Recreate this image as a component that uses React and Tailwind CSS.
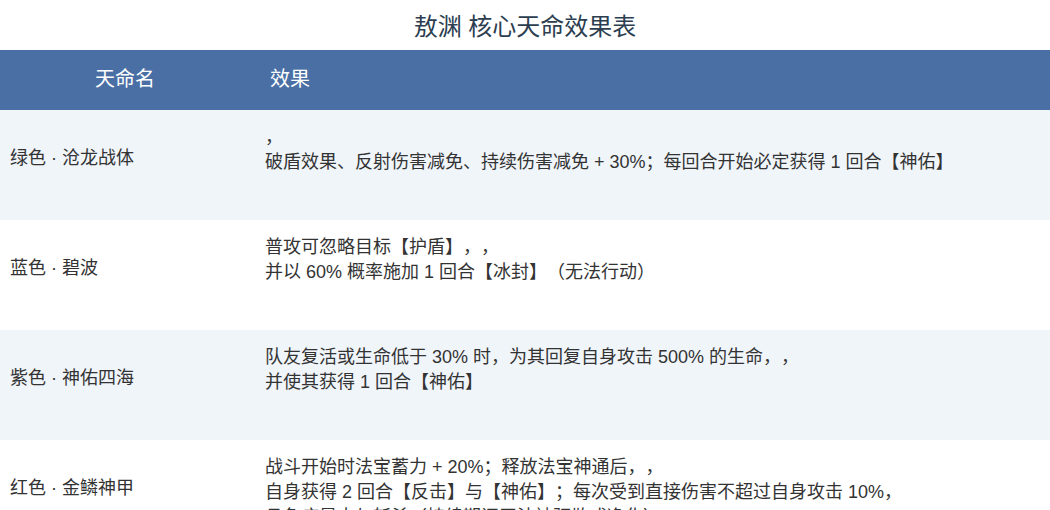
import React from 'react';

const rows = [
    {
        name: '绿色 · 沧龙战体',
        lines: ['，', '破盾效果、反射伤害减免、持续伤害减免 + 30%；每回合开始必定获得 1 回合【神佑】'],
    },
    {
        name: '蓝色 · 碧波',
        lines: ['普攻可忽略目标【护盾】，，', '并以 60% 概率施加 1 回合【冰封】（无法行动）'],
    },
    {
        name: '紫色 · 神佑四海',
        lines: ['队友复活或生命低于 30% 时，为其回复自身攻击 500% 的生命，，', '并使其获得 1 回合【神佑】'],
    },
    {
        name: '红色 · 金鳞神甲',
        lines: [
            '战斗开始时法宝蓄力 + 20%；释放法宝神通后，，',
            '自身获得 2 回合【反击】与【神佑】；每次受到直接伤害不超过自身攻击 10%，',
            '且免疫暴击与斩杀（持续期间无法被驱散或净化）',
        ],
    },
];

export default function App() {
    return (
        <div className="w-[1050px] h-[510px] overflow-hidden bg-white text-[#333] [text-spacing-trim:space-all] font-['Liberation_Sans','Noto_Sans_CJK_SC',sans-serif]">
            {/* Title */}
            <h2 className="h-[50px] flex items-center justify-center text-[24px] text-[#2c3e50] pt-[3px]">
                敖渊 核心天命效果表
            </h2>

            {/* Header */}
            <div className="h-[60px] bg-[#4a6fa5] text-white text-[20px] flex items-center pb-[2px]">
                <div className="w-[250px] text-center">天命名</div>
                <div className="flex-1 pl-[20px]">效果</div>
            </div>

            {/* Rows */}
            {rows.map((row, i) => (
                <div
                    key={row.name}
                    className={`h-[110px] flex text-[18px] leading-[25px] ${i % 2 === 0 ? 'bg-[#f0f5fa]' : 'bg-white'}`}
                >
                    <div className="w-[250px] pl-[10px] pt-[36px]">{row.name}</div>
                    <div className="flex-1 pl-[15px] pt-[15px]">
                        {row.lines.map((line, j) => (
                            <div key={j} className="whitespace-nowrap">{line}</div>
                        ))}
                    </div>
                </div>
            ))}
        </div>
    );
}
